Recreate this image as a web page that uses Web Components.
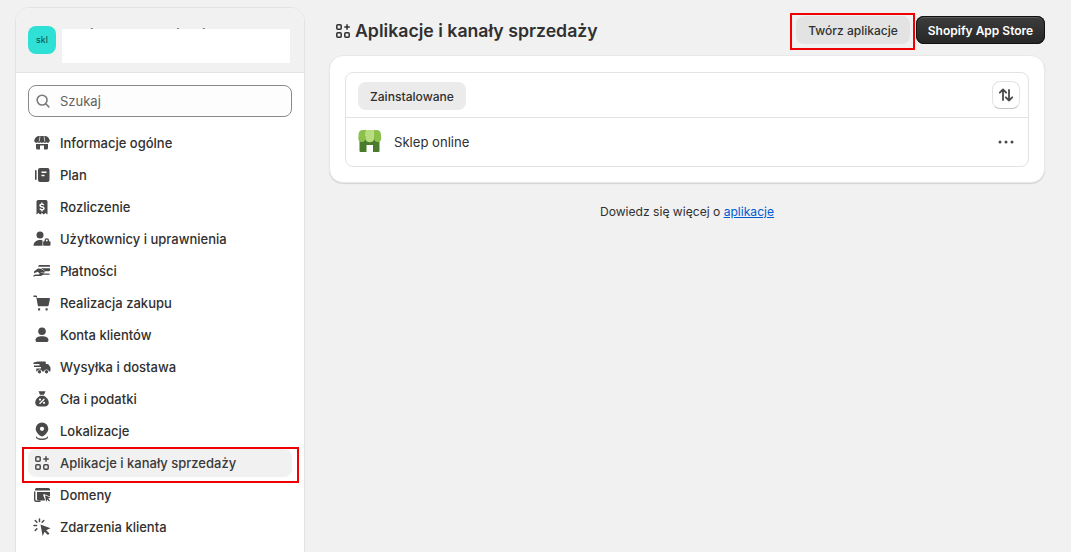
<!DOCTYPE html>
<html lang="pl"><head><meta charset="utf-8"><title>Aplikacje i kanały sprzedaży</title>
<style>
html,body{margin:0;height:100%;overflow:hidden;background:#f1f1f1}
body{font-family:Inter,"Liberation Sans",sans-serif;color:#303030}
</style></head><body>
<settings-page>
  <settings-sidebar slot="side" name="Moja testowa aplikacja">
    <nav-item icon="store">Informacje ogólne</nav-item>
    <nav-item icon="plan">Plan</nav-item>
    <nav-item icon="bill">Rozliczenie</nav-item>
    <nav-item icon="users">Użytkownicy i uprawnienia</nav-item>
    <nav-item icon="pay">Płatności</nav-item>
    <nav-item icon="cart">Realizacja zakupu</nav-item>
    <nav-item icon="person">Konta klientów</nav-item>
    <nav-item icon="truck">Wysyłka i dostawa</nav-item>
    <nav-item icon="tax">Cła i podatki</nav-item>
    <nav-item icon="pin">Lokalizacje</nav-item>
    <nav-item icon="apps" active highlight>Aplikacje i kanały sprzedaży</nav-item>
    <nav-item icon="domain">Domeny</nav-item>
    <nav-item icon="click">Zdarzenia klienta</nav-item>
  </settings-sidebar>
  <apps-main slot="main"></apps-main>
</settings-page>
<script>
const ICONS={
store:'<path d="M4 11h12v4a1.500 1.500 0 0 1-1.500 1.500H12v-4H8v4H5.500A1.500 1.500 0 0 1 4 15z"/><path d="M6.500 3h7c2.200.4 3.800 2.100 4.300 4.600a2 2 0 0 1-3.300 1.600 2.300 2.300 0 0 1-3 0 2.500 2.500 0 0 1-3 0 2.300 2.300 0 0 1-3 0A2 2 0 0 1 2.200 7.600C2.700 5.100 4.300 3.400 6.500 3z"/><path d="M8 3.300L7.200 8.500M12 3.300l.8 5.200" stroke="#fff" stroke-width=".7" fill="none"/>',
plan:'<rect x="3" y="5" width="1.600" height="10" rx=".8"/><path fill-rule="evenodd" d="M8 3h7.500A2 2 0 0 1 17.500 5v10a2 2 0 0 1-2 2H8a2 2 0 0 1-2-2V5a2 2 0 0 1 2-2zm1.500 3.500V8h5V6.500zm0 3.200v1.500h3V9.700z"/>',
bill:'<path fill-rule="evenodd" d="M6 3h8a1.500 1.500 0 0 1 1.500 1.500V17.500l-2-1.400-1.700 1.400-1.800-1.400-1.800 1.400-1.700-1.400-2 1.400V4.500A1.500 1.500 0 0 1 6 3zm3.300 2.500v1c-1.200.2-2 1-2 2 0 1.200 1 1.700 2.100 2l.9.200c.6.200.9.400.9.700 0 .4-.5.700-1.200.7s-1.300-.3-1.500-.8l-1.200.5c.3.800 1 1.400 2 1.600v1h1.400v-1c1.200-.2 2-1 2-2.100 0-1.200-1-1.700-2.100-2l-.9-.2c-.6-.2-.9-.4-.9-.7s.4-.6 1.100-.6c.6 0 1.100.2 1.300.7l1.200-.5c-.3-.8-1-1.300-1.900-1.500v-1z"/>',
users:'<circle cx="8" cy="6" r="3.500"/><path d="M1.500 16.800c0-3.300 2.600-5.800 6.500-5.800 1 0 1.800.1 2.500.4v5.400z"/><path fill-rule="evenodd" d="M14.800 9.200a2.300 2.300 0 0 1 2.300 2.300v.7h.4c.6 0 1 .4 1 1v2.600c0 .6-.4 1-1 1h-5.400c-.6 0-1-.4-1-1v-2.600c0-.6.4-1 1-1h.4v-.7a2.300 2.300 0 0 1 2.300-2.300zm0 1.400a.9.900 0 0 0-.9.900v.7h1.800v-.7a.9.900 0 0 0-.9-.9z"/>',
pay:'<path d="M7.500 4h9.500c.6 0 1 .4 1 1v.8H6.300A1.500 1.500 0 0 1 7.500 4z"/><path d="M9 7.300h9v2c0 .5-.4.900-.9.900h-4.200c-.9-.9-2.400-2.100-3.900-2.900z"/><path d="M2 10.500l3.200-2.600c1.700-.7 2.900-.6 4.200.2l3 1.900c.9.600.4 1.900-.7 1.700L8.500 11v.2l3.600 1.300h5.400v1.300h-6L8.600 15H3.200L1.500 16v-1.600L3 13.600h3.700l1.200-.5-2.100-2.300-3.800 1.400z"/>',
cart:'<path d="M1.500 2.500h2.300c.6 0 1.100.4 1.200 1L5.200 5H17c.6 0 1 .6.900 1.200l-1.300 6.300c-.1.500-.5.800-1 .8H6.800a1 1 0 0 1-1-.9L4.300 4H1.500z"/><rect x="6" y="15.200" width="2.200" height="2.200" rx=".6"/><rect x="13.500" y="15.200" width="2.200" height="2.200" rx=".6"/>',
person:'<circle cx="10" cy="6.300" r="3.800"/><path d="M3.500 15.200c0-2.400 2.500-3.900 6.500-3.900s6.500 1.500 6.500 3.900c0 1-.8 1.800-1.800 1.800H5.300c-1 0-1.800-.8-1.800-1.800z"/>',
truck:'<path d="M6 4.500h6.800c.6 0 1 .4 1 1V7h1.700c.5 0 .9.200 1.100.6l1.700 2.600c.1.200.2.400.2.600V13.500c0 .6-.4 1-1 1h-.4a2.800 2.800 0 0 0-5.300 0h-1.500a2.800 2.800 0 0 0-5.300 0H4.300v-3H9V10H2V8.500h5.500V7H1.500V5.500z"/><circle cx="7.500" cy="14.800" r="1.700"/><circle cx="14.500" cy="14.800" r="1.700"/>',
tax:'<path fill-rule="evenodd" d="M6.500 2.200h7l-1.500 3.600H8zM8 6.800h4c2.800 1.600 4.800 4.300 4.800 6.900 0 2.300-1.800 3.800-4.300 3.800h-5c-2.500 0-4.300-1.500-4.300-3.800 0-2.600 2-5.300 4.800-6.900zM8 9.500a1.100 1.100 0 1 0 0 2.200 1.100 1.100 0 0 0 0-2.200zm3.900.1L7.100 14.300l.9.900 4.800-4.700zm.1 3.100a1.100 1.100 0 1 0 0 2.200 1.100 1.100 0 0 0 0-2.200z"/>',
pin:'<path fill-rule="evenodd" d="M10 1.500a6.300 6.300 0 0 1 6.300 6.300c0 3.200-2.800 5.900-5 7.300a2.500 2.500 0 0 1-2.600 0c-2.200-1.400-5-4.100-5-7.300A6.300 6.300 0 0 1 10 1.500zm0 4.200a2.100 2.100 0 1 0 0 4.200 2.100 2.100 0 0 0 0-4.200z"/><path d="M4.500 15.300l.9 1.100c1 .7 2.800 1.100 4.600 1.100s3.600-.4 4.600-1.100l.9-1.100.7 1.200c-.4 1.400-3 2.600-6.200 2.600s-5.800-1.200-6.200-2.600z" opacity=".9"/>',
apps:'<path fill="none" stroke="currentColor" stroke-width="1.500" d="M4.800 3.800h2.400a1 1 0 0 1 1 1v2.400a1 1 0 0 1-1 1H4.800a1 1 0 0 1-1-1V4.800a1 1 0 0 1 1-1zM4.800 11.800h2.400a1 1 0 0 1 1 1v2.400a1 1 0 0 1-1 1H4.800a1 1 0 0 1-1-1v-2.400a1 1 0 0 1 1-1zM12.800 11.800h2.400a1 1 0 0 1 1 1v2.400a1 1 0 0 1-1 1h-2.400a1 1 0 0 1-1-1v-2.400a1 1 0 0 1 1-1zM14 3.300v5.500M11.300 6h5.500"/>',
domain:'<path d="M4.500 3h12A1.500 1.500 0 0 1 18 4.500v1H3v-1A1.500 1.500 0 0 1 4.500 3z"/><path d="M2 6.500h1.400v7.700c0 .8.600 1.300 1.300 1.300h3.800V17H4.500A2.500 2.500 0 0 1 2 14.500z" /><path d="M5 7h13v4.500l-5.500-2.300a.9.900 0 0 0-1.200 1.200l2 5.100H6.500A1.500 1.500 0 0 1 5 14z"/><path d="M13 10.300l5.500 2.300-2.300 1 1.800 1.800-1 1-1.800-1.800-1 2.300z"/>',
click:'<path d="M8.500 7.500l10 3.700-4.300 2 3.300 3.300-1.600 1.600-3.300-3.300-2 4.300z"/><g fill="none" stroke="currentColor" stroke-width="1.500" stroke-linecap="round"><path d="M7.500 2v2.500M3.200 3.500l1.700 1.700M11.800 3.500l-1.700 1.700M2 8.500h2.500M3.200 13.500l1.700-1.700"/></g>'
};
function icon(name,size=20){return `<svg xmlns="http://www.w3.org/2000/svg" width="${size}" height="${size}" viewBox="0 0 20 20" fill="currentColor" aria-hidden="true">${ICONS[name]}</svg>`}
class SettingsPage extends HTMLElement{constructor(){super();this.attachShadow({mode:'open'}).innerHTML=`<style>
:host{display:flex;gap:24px;height:552px;box-sizing:border-box;padding:7px 26px 0 15px;overflow:hidden;align-items:flex-start}
::slotted([slot=main]){flex:1;min-width:0}
</style><slot name="side"></slot><slot name="main"></slot>`}}
class SettingsSidebar extends HTMLElement{constructor(){super();this.attachShadow({mode:'open'}).innerHTML=`<style>
:host{display:block;flex:none;width:290px;height:600px;box-sizing:border-box;background:#fff;border:1px solid #e3e3e3;border-radius:14px;overflow:hidden}
header{display:flex;align-items:center;gap:6px;height:65px;box-sizing:border-box;padding:0 14px 0 12px;background:#f1f1f1;border-bottom:1px solid #e3e3e3}
.av{flex:none;width:28px;height:28px;border-radius:8px;background:#2ee0d5;color:#0b4a46;font-size:9px;line-height:28px;text-align:center;margin-bottom:1px}
.nm{position:relative;flex:1;height:34px;background:#fff;margin-top:12px}
.nm span{position:absolute;left:8px;top:-3px;font-size:13px;font-weight:600;line-height:16px;color:#303030;white-space:nowrap;clip-path:inset(0 0 13px 0)}
search-box{margin:12px 12px 10px}
nav{display:flex;flex-direction:column;padding:0 12px}
</style><header><div class="av">skl</div><div class="nm"><span>${this.getAttribute('name')||''}</span></div></header>
<search-box placeholder="Szukaj"></search-box><nav><slot></slot></nav>`}}
class SearchBox extends HTMLElement{constructor(){super();this.attachShadow({mode:'open'}).innerHTML=`<style>
:host{display:flex;align-items:center;gap:8px;height:32px;box-sizing:border-box;padding:0 10px 0 5px;background:#fdfdfd;border:1px solid #8a8a8a;border-radius:8px;color:#616161;font-size:13px}
svg{flex:none}
</style><svg width="18" height="18" viewBox="0 0 20 20" fill="none" stroke="#7a7a7a" stroke-width="1.700" stroke-linecap="round"><circle cx="9" cy="9" r="5.500"/><path d="M13 13l3.500 3.500"/></svg><span>${this.getAttribute('placeholder')}</span>`}}
class NavItem extends HTMLElement{connectedCallback(){if(this.shadowRoot)return;this.attachShadow({mode:'open'}).innerHTML=`<style>
:host{display:block;position:relative}
a{display:flex;align-items:center;gap:8px;height:32px;padding:0 8px 0 4px;color:#303030;font-size:13px;font-weight:550;box-sizing:border-box}
svg{flex:none;color:#4a4a4a}
:host([active]) a{height:28px;margin:2px 0;background:#f1f1f1;border-radius:8px;color:#3a3a3a}
.hl{position:absolute;left:-6px;right:-7px;top:0;bottom:-4px;border:2px solid #f00000;pointer-events:none}
</style><a>${icon(this.getAttribute('icon'))}<span><slot></slot></span></a>${this.hasAttribute('highlight')?'<i class="hl"></i>':''}`}}
class PageTitle extends HTMLElement{constructor(){super();this.attachShadow({mode:'open'}).innerHTML=`<style>
:host{display:flex;align-items:center;justify-content:space-between;height:28px;margin:9px 0 11px 7px}
h1{display:flex;align-items:center;gap:2px;margin:1px 0 0 -3px;font-size:17.7px;line-height:24px;font-weight:620;color:#303030}
svg{color:#303030}.act{display:flex;gap:6px}
</style><h1>${icon('apps',20)}<slot></slot></h1><div class="act"><slot name="actions"></slot></div>`}}
class UiButton extends HTMLElement{connectedCallback(){if(this.shadowRoot)return;this.attachShadow({mode:'open'}).innerHTML=`<style>
:host{display:block;position:relative;font-size:12px;font-weight:550}
:host([primary]){font-weight:640}
button{display:block;font:inherit;height:28px;padding:0;border:0;border-radius:8px;background:#e3e3e3;color:#303030;white-space:nowrap;width:114px}
:host([primary]) button{width:129px;color:#fff;background:linear-gradient(#3d3d3d,#262626);box-shadow:inset 0 0 0 1px #111,inset 0 2px 0 #5a5a5a}
.hl{position:absolute;inset:-3px -5px -6px -6px;border:2px solid #f00000;pointer-events:none}
</style><button><slot></slot></button>${this.hasAttribute('highlight')?'<i class="hl"></i>':''}`}}
class AppRow extends HTMLElement{constructor(){super();this.attachShadow({mode:'open'}).innerHTML=`<style>
:host{display:flex;align-items:center;height:48px;box-sizing:border-box;padding:0 14px 0 12px;font-size:13.1px;color:#303030}
svg.logo{flex:none;margin-right:12px}
.s{flex:1}
svg.more{flex:none}
</style><svg class="logo" width="24" height="24" viewBox="0 0 24 24"><rect width="24" height="24" rx="5" fill="#fff"/><path d="M1.500 6h20v15a1 1 0 0 1-1 1h-5.500v-7h-6.500v7H2.500a1 1 0 0 1-1-1z" fill="#4a7a2c"/><path d="M5 0h3l-.700 8.500a3.400 3.400 0 0 1-7 0L.600 4A4.500 4.500 0 0 1 5 0z" fill="#8cc04b"/><path d="M15.500 0h3a4.500 4.500 0 0 1 4.400 4l.3 4.500a3.400 3.400 0 0 1-7 0z" fill="#8cc04b"/><path d="M8 0h7.500l.7 8.500a4.500 4.500 0 0 1-8.900 0z" fill="#b8dc80"/></svg><span class="s"><slot></slot></span><svg class="more" width="16" height="4" viewBox="0 0 16 4" fill="#4a4a4a"><circle cx="2" cy="2" r="1.500"/><circle cx="8" cy="2" r="1.500"/><circle cx="14" cy="2" r="1.500"/></svg>`}}
class AppsCard extends HTMLElement{constructor(){super();this.attachShadow({mode:'open'}).innerHTML=`<style>
:host{display:block;box-sizing:border-box;height:128px;padding:16px 15px 15px;background:#fff;border:1px solid #e8e8e8;border-radius:14px;box-shadow:0 1px 1px rgba(0,0,0,.12)}
.box{border:1px solid #e3e3e3;border-radius:8px;height:95px;box-sizing:border-box}
.top{display:flex;align-items:center;justify-content:space-between;height:45px;box-sizing:border-box;padding:0 8px 0 12px;border-bottom:1px solid #e3e3e3}
.chip{height:28px;line-height:29px;padding:0 12px;min-width:84px;border-radius:8px;background:#ebebeb;font-size:12.1px;font-weight:550;color:#303030;margin-top:2px}
.sort{width:28px;height:28px;box-sizing:border-box;border:1px solid #e3e3e3;border-bottom-color:#c4c4c4;border-radius:8px;background:#fff;display:flex;align-items:center;justify-content:center;padding:0}
</style><div class="box"><div class="top"><span class="chip">Zainstalowane</span><button class="sort" aria-label="Sortuj"><svg width="20" height="20" viewBox="0 0 20 20" fill="none" stroke="#4a4a4a" stroke-width="1.800" stroke-linecap="round" stroke-linejoin="round"><path d="M7 15V4.500M3.800 7.700L7 4.500l3.200 3.200M13 5v10.500M9.800 12.300l3.200 3.200 3.200-3.200"/></svg></button></div><slot></slot></div>`}}
class AppsMain extends HTMLElement{constructor(){super();this.attachShadow({mode:'open'}).innerHTML=`<style>
:host{display:block}
p{margin:21px 0 0;text-align:center;font-size:12.1px;line-height:16px;color:#303030}
a{color:#005bd3;text-decoration:underline}
</style><page-title>Aplikacje i kanały sprzedaży<ui-button slot="actions" highlight>Twórz aplikacje</ui-button><ui-button slot="actions" primary>Shopify App Store</ui-button></page-title>
<apps-card><app-row>Sklep online</app-row></apps-card>
<p>Dowiedz się więcej o <a href="#">aplikacje</a></p>`}}
customElements.define('search-box',SearchBox);
customElements.define('nav-item',NavItem);
customElements.define('settings-sidebar',SettingsSidebar);
customElements.define('settings-page',SettingsPage);
customElements.define('page-title',PageTitle);
customElements.define('ui-button',UiButton);
customElements.define('app-row',AppRow);
customElements.define('apps-card',AppsCard);
customElements.define('apps-main',AppsMain);
</script></body></html>
